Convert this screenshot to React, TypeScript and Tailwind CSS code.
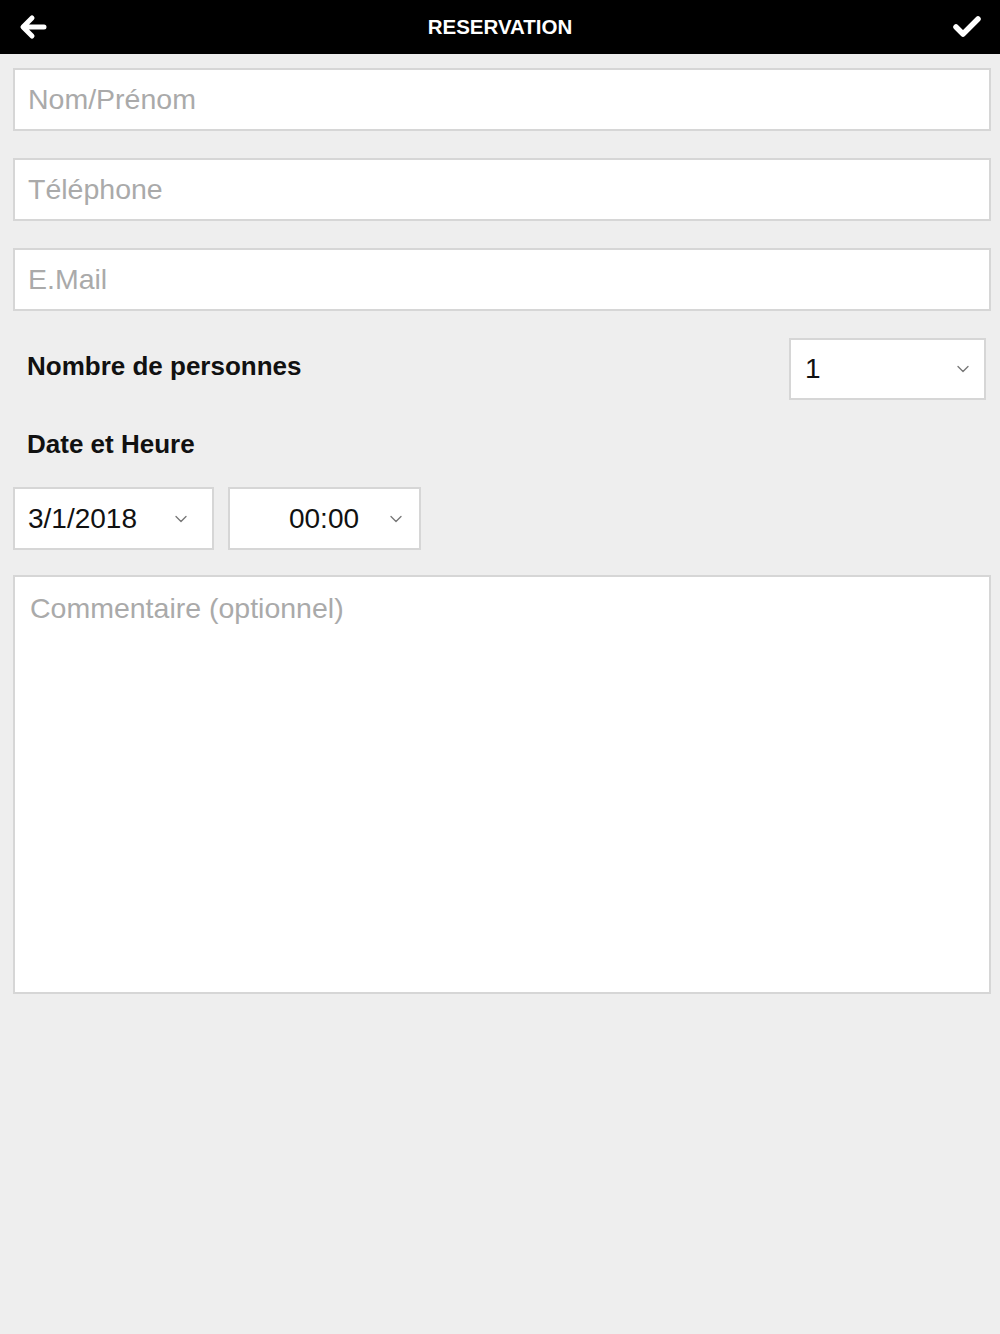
import { ChevronDown } from "lucide-react";

const fields = ["Nom/Prénom", "Téléphone", "E.Mail"];

function Select({ value, className, textClass }: { value: string; className: string; textClass?: string }) {
  return (
    <div className={`flex items-center bg-white border-2 border-[#d6d6d6] ${className}`}>
      <span className={`flex-1 text-[28px] text-[#111] ${textClass ?? ""}`}>{value}</span>
      <ChevronDown size={20} strokeWidth={1.6} className="text-[#777]" />
    </div>
  );
}

export default function App() {
  return (
    <div className="min-h-[1334px] bg-[#eeeeee] font-['Liberation_Sans',Arial,sans-serif]">
      <header className="flex h-[54px] items-center justify-between bg-black px-[18px]">
        <svg width="30" height="30" viewBox="0 0 30 30">
          <path d="M26 15H6M14 6l-9 9 9 9" fill="none" stroke="white" strokeWidth="5" strokeLinecap="round" strokeLinejoin="round" />
        </svg>
        <h1 className="text-[20.5px] font-bold text-white">RESERVATION</h1>
        <svg width="30" height="30" viewBox="0 0 30 30">
          <path d="M4 15l7 7L26 7" fill="none" stroke="white" strokeWidth="5.5" strokeLinecap="round" strokeLinejoin="round" />
        </svg>
      </header>

      <main className="flex flex-col pl-[13px] pr-[9px] pt-[14px]">
        <div className="flex flex-col gap-[27px]">
          {fields.map((f) => (
            <div key={f} className="flex h-[63px] items-center border-2 border-[#d6d6d6] bg-white px-[13px]">
              <span className="text-[28.5px] text-[#aaaaaa]">{f}</span>
            </div>
          ))}
        </div>

        <div className="mt-[27px] flex items-start justify-between pl-[14px] pr-[5px]">
          <span className="mt-[9px] text-[26px] font-bold text-[#111]">Nombre de personnes</span>
          <Select value="1" className="h-[62px] w-[197px] pl-[14px] pr-[11px]" />
        </div>

        <div className="mt-[25px] pl-[14px] text-[26px] font-bold text-[#111]">Date et Heure</div>

        <div className="mt-[23px] flex gap-[14px]">
          <Select value="3/1/2018" className="h-[63px] w-[201px] pl-[13px] pr-[21px]" />
          <Select value="00:00" className="h-[63px] w-[193px] pl-[12px] pr-[13px]" textClass="text-center pl-[20px]" />
        </div>

        <div className="mt-[25px] h-[419px] border-2 border-[#d6d6d6] bg-white px-[15px] pt-[10px]">
          <span className="text-[28.5px] text-[#aaaaaa]">Commentaire (optionnel)</span>
        </div>
      </main>
    </div>
  );
}
